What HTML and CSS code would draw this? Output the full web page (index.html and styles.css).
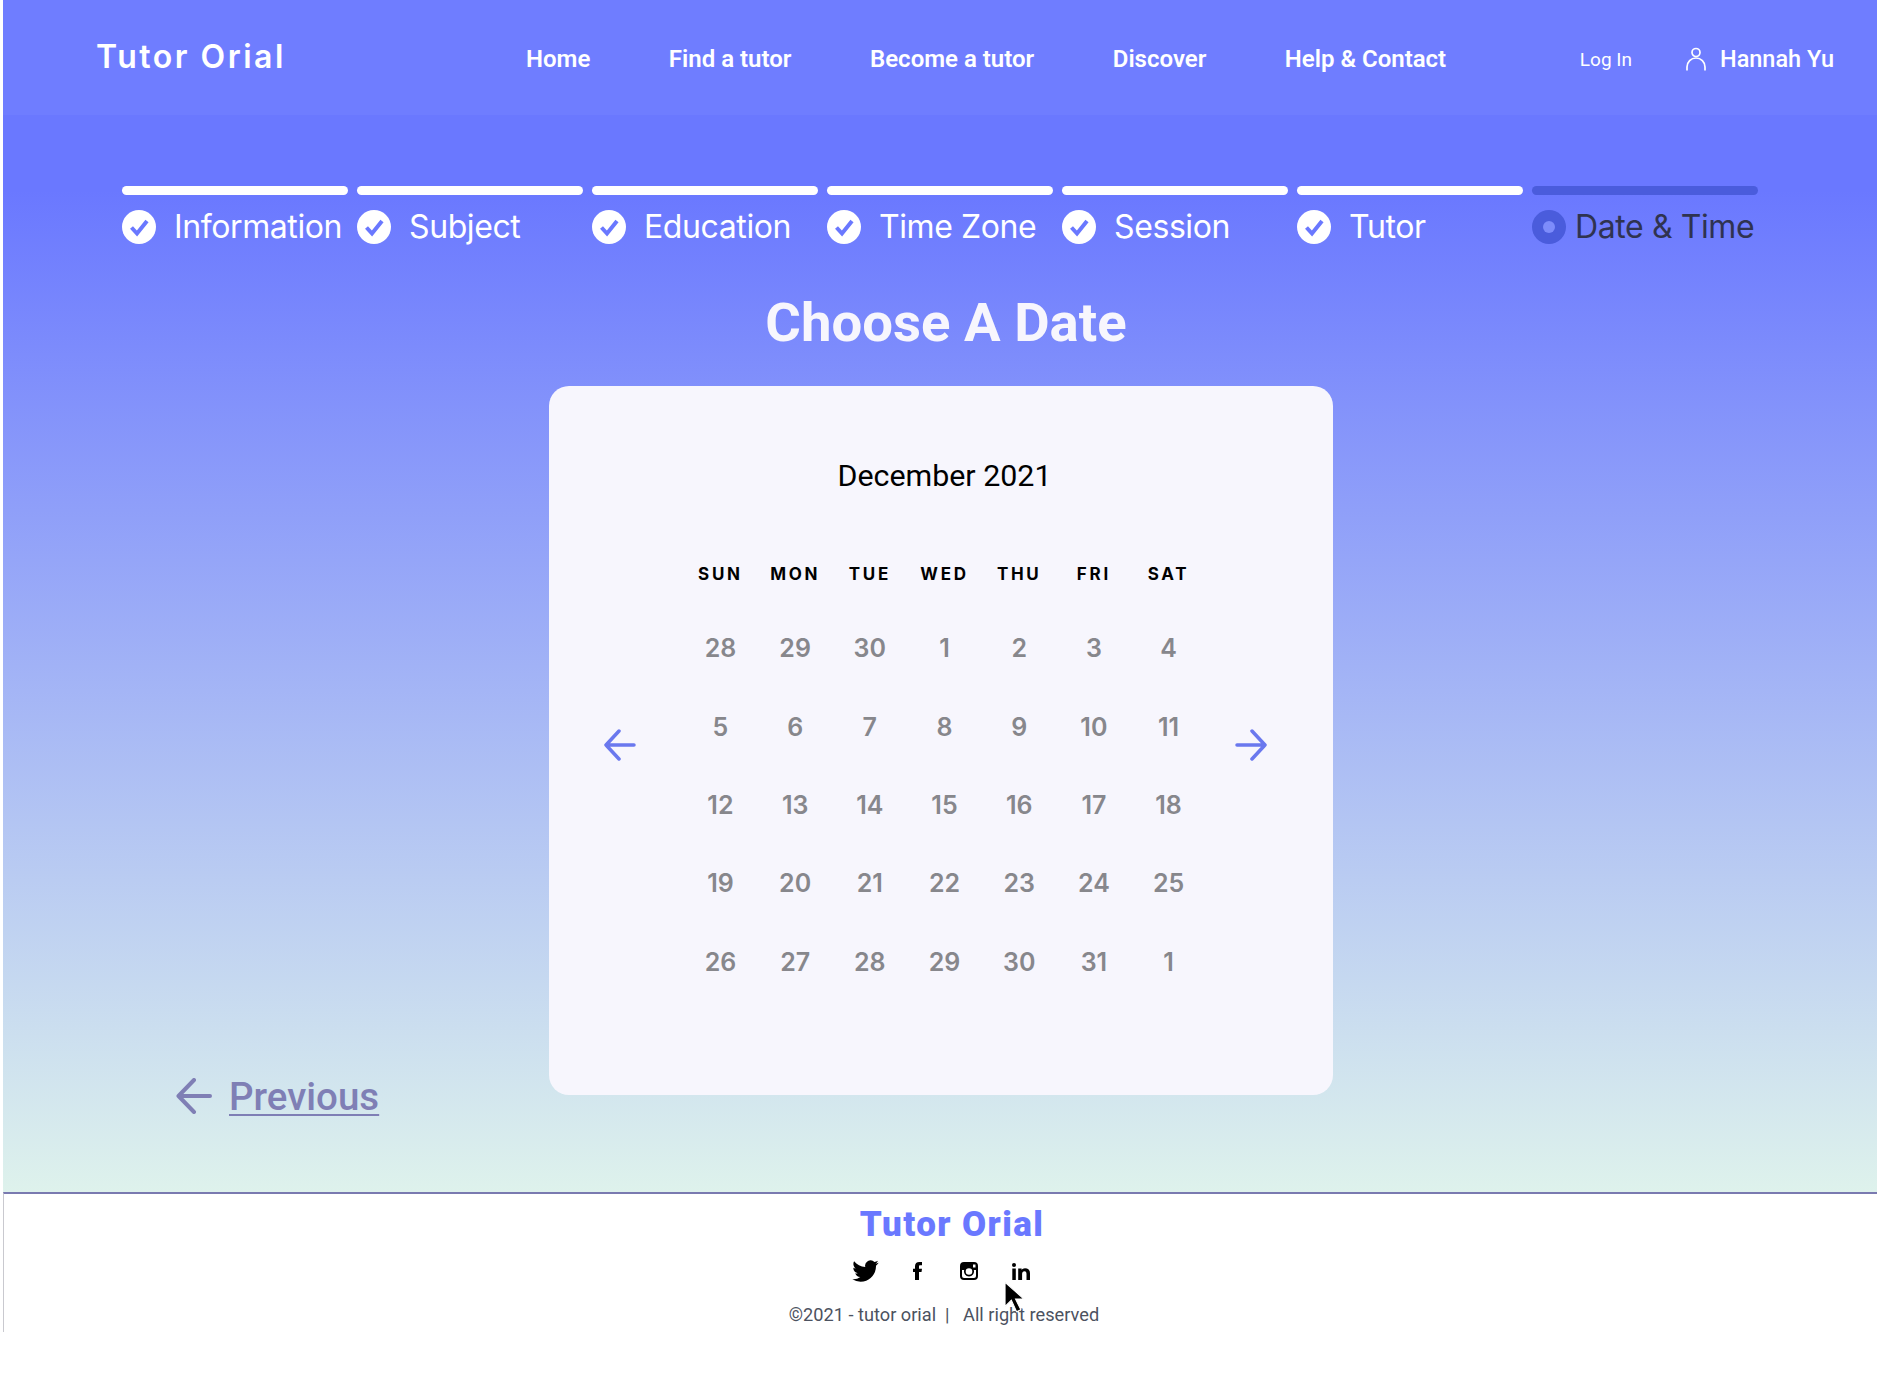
FILE: index.html
```html
<!DOCTYPE html>
<html lang="en">
<head>
    <meta charset="UTF-8">
    <meta name="viewport" content="width=device-width, initial-scale=1.0">
    <title>Tutor Orial - Choose A Date</title>
    <link rel="stylesheet" href="styles.css">
</head>
<body>
    <svg class="sprites" width="0" height="0">
        <symbol id="done" viewBox="0 0 34 34">
            <circle cx="17" cy="17" r="17" fill="#fff"/>
            <path d="M9.5 17.5l5.5 6L25 11" fill="none" stroke="#6a78ff" stroke-width="4"/>
        </symbol>
    </svg>
    <div class="page">
        <header class="topbar">
            <a class="logo">Tutor Orial</a>
            <nav class="nav">
                <a>Home</a>
                <a>Find a tutor</a>
                <a>Become a tutor</a>
                <a>Discover</a>
                <a>Help &amp; Contact</a>
            </nav>
            <div class="account">
                <a class="login">Log In</a>
                <a class="user">
                    <svg class="user-icon" viewBox="0 0 20 24" fill="none" stroke="#fff" stroke-width="1.7">
                        <circle cx="10" cy="5.5" r="4"/>
                        <path d="M1 23.5v-3.5c0-5 4-9 9-9s9 4 9 9v3.5"/>
                    </svg>
                    Hannah Yu
                </a>
            </div>
        </header>

        <main class="hero">
            <ol class="steps">
                <li class="step"><svg class="step-icon"><use href="#done"/></svg><span>Information</span></li>
                <li class="step"><svg class="step-icon"><use href="#done"/></svg><span>Subject</span></li>
                <li class="step"><svg class="step-icon"><use href="#done"/></svg><span>Education</span></li>
                <li class="step"><svg class="step-icon"><use href="#done"/></svg><span>Time Zone</span></li>
                <li class="step"><svg class="step-icon"><use href="#done"/></svg><span>Session</span></li>
                <li class="step"><svg class="step-icon"><use href="#done"/></svg><span>Tutor</span></li>
                <li class="step current">
                    <svg class="step-icon" viewBox="0 0 34 34">
                        <circle cx="17" cy="17" r="17" fill="#4a5cdc"/>
                        <circle cx="17" cy="17" r="6" fill="#7d8cfb"/>
                    </svg>
                    <span>Date &amp; Time</span>
                </li>
            </ol>

            <h1 class="title">Choose A Date</h1>

            <div class="booking">
                <a class="previous">
                    <svg class="previous-icon" viewBox="0 0 36 36" fill="none" stroke="#7f7fb5" stroke-width="4" stroke-linecap="round" stroke-linejoin="round">
                        <path d="M34 18H3M18 2L2.5 18 18 34"/>
                    </svg>
                    <span>Previous</span>
                </a>

                <section class="calendar">
                    <h2 class="month">December 2021</h2>
                    <div class="calendar-body">
                        <svg class="arrow" viewBox="0 0 32 32" fill="none" stroke="#6a78ee" stroke-width="3.5" stroke-linecap="round" stroke-linejoin="round">
                            <path d="M30 16H2M15 2L2 16l13 14"/>
                        </svg>
                        <div class="days">
                            <b>SUN</b><b>MON</b><b>TUE</b><b>WED</b><b>THU</b><b>FRI</b><b>SAT</b>
                            <span>28</span><span>29</span><span>30</span><span>1</span><span>2</span><span>3</span><span>4</span>
                            <span>5</span><span>6</span><span>7</span><span>8</span><span>9</span><span>10</span><span>11</span>
                            <span>12</span><span>13</span><span>14</span><span>15</span><span>16</span><span>17</span><span>18</span>
                            <span>19</span><span>20</span><span>21</span><span>22</span><span>23</span><span>24</span><span>25</span>
                            <span>26</span><span>27</span><span>28</span><span>29</span><span>30</span><span>31</span><span>1</span>
                        </div>
                        <svg class="arrow" viewBox="0 0 32 32" fill="none" stroke="#6a78ee" stroke-width="3.5" stroke-linecap="round" stroke-linejoin="round">
                            <path d="M2 16h28M17 2l13 14-13 14"/>
                        </svg>
                    </div>
                </section>
            </div>
        </main>

        <footer class="footer">
            <div class="footer-logo">Tutor Orial</div>
            <div class="social">
                <svg class="icon-twitter" viewBox="0 0 24 20"><path d="M23.953 2.57a10 10 0 01-2.825.775 4.958 4.958 0 002.163-2.723c-.951.555-2.005.959-3.127 1.184a4.92 4.92 0 00-8.384 4.482C7.69 6.095 4.067 4.13 1.64 1.162a4.822 4.822 0 00-.666 2.475c0 1.71.87 3.213 2.188 4.096a4.904 4.904 0 01-2.228-.616v.06a4.923 4.923 0 003.946 4.827 4.996 4.996 0 01-2.212.085 4.936 4.936 0 004.604 3.417 9.867 9.867 0 01-6.102 2.105c-.39 0-.779-.023-1.17-.067a13.995 13.995 0 007.557 2.209c9.053 0 13.998-7.496 13.998-13.985 0-.21 0-.42-.015-.63A9.935 9.935 0 0024 2.59z"/></svg>
                <svg class="icon-facebook" viewBox="0 0 9 18"><path d="M2 18V10H0V6.800h2V4.300C2 1.500 3.600 0 6.300 0H9v3.200H7.300C6.300 3.200 6 3.700 6 4.500v2.300h3L8.500 10H6v8z"/></svg>
                <svg class="icon-instagram" viewBox="0 0 18 18"><path fill-rule="evenodd" d="M4 0h10a4 4 0 014 4v10a4 4 0 01-4 4H4a4 4 0 01-4-4V4a4 4 0 014-4zM2 8v6a2 2 0 002 2h10a2 2 0 002-2V8h-2.200a5 5 0 11-9.600 0zM13 2.500V5.500h2.500V2.500zM9 6.200a3.300 3.300 0 100 6.600 3.300 3.300 0 000-6.600z"/></svg>
                <svg class="icon-linkedin" viewBox="0 0 18 17"><circle cx="2" cy="2" r="2"/><rect x="0.3" y="5.5" width="3.5" height="11.5"/><path d="M6.200 5.500h3.400V7c.7-1.100 1.900-1.800 3.400-1.800 3.500 0 5 2 5 5.300V17h-3.500v-5.900c0-1.600-.5-2.800-2-2.800-1.600 0-2.400 1.200-2.400 2.800V17H6.200z"/></svg>
            </div>
            <p class="copyright">©2021 - tutor orial &nbsp;|&nbsp;&nbsp; All right reserved</p>
            <svg class="cursor" viewBox="0 0 20 30">
                <path d="M1 1v23l6-6 5 11 4-2-5-10h8z" fill="#000" stroke="#fff" stroke-width="1"/>
            </svg>
        </footer>
    </div>
</body>
</html>
```

FILE: styles.css
```css
* {
    box-sizing: border-box;
}
html, body {
    height: 100%;
}
body {
    margin: 0;
    background-color: #fff;
    font-family: Inter, "Liberation Sans", sans-serif;
}
.sprites {
    position: absolute;
}
.page {
    margin: 0 3px;
}

/* top bar */
.topbar {
    display: flex;
    align-items: center;
    height: 115px;
    padding: 0 43px 0 93px;
    background-color: #6f7dff;
    color: #fff;
}
.logo {
    width: 430px;
    margin-top: -3px;
    font-size: 32px;
    font-weight: 600;
    letter-spacing: 2.5px;
}
.nav {
    display: flex;
    gap: 78.5px;
    margin-top: 3px;
    font-family: Roboto, sans-serif;
    font-size: 24px;
    font-weight: 600;
}
.account {
    display: flex;
    align-items: center;
    margin-top: 3px;
    margin-left: auto;
    gap: 54px;
}
.login {
    font-family: Roboto, sans-serif;
    font-size: 19px;
}
.user {
    display: flex;
    align-items: center;
    gap: 14px;
    font-family: Roboto, sans-serif;
    font-size: 23.5px;
    font-weight: 500;
}
.user-icon {
    width: 20px;
    height: 24px;
}

/* main area */
.hero {
    height: 1077px;
    padding: 71px 0 0 119px;
    background: linear-gradient(#6a78ff 7%, #def2ec 100%);
}
.steps {
    display: grid;
    grid-template-columns: repeat(7, 226px);
    gap: 9px;
    margin: 0;
    padding: 0;
    list-style: none;
}
.step {
    display: flex;
    flex-wrap: wrap;
    align-items: center;
    gap: 12px 18px;
    color: #fff;
    font-size: 32px;
    white-space: nowrap;
}
.step::before {
    content: "";
    flex: 0 0 100%;
    height: 9px;
    border-radius: 5px;
    background-color: #fff;
}
.step span {
    letter-spacing: -0.4px;
}
.step-icon {
    flex: none;
    width: 34px;
    height: 34px;
}
.current {
    column-gap: 9px;
    color: #2f3350;
}
.current::before {
    background-color: #4a5cdc;
}
.title {
    margin: 43px 0 0 0;
    padding-right: 107px;
    color: #f7f6fd;
    font-family: Roboto, sans-serif;
    font-size: 54.5px;
    font-weight: 700;
    line-height: 66px;
    text-align: center;
}

.booking {
    display: flex;
    align-items: flex-end;
    margin-top: 31px;
}
.previous {
    display: flex;
    align-items: center;
    gap: 17px;
    width: 427px;
    margin-bottom: -23.5px;
    padding-left: 54px;
    color: #7f7fb5;
    font-family: Roboto, sans-serif;
    font-size: 38.5px;
    font-weight: 500;
}
.previous span {
    text-decoration: underline;
    text-decoration-thickness: 2px;
    text-underline-offset: 4px;
}
.previous-icon {
    width: 36px;
    height: 36px;
}

/* calendar card */
.calendar {
    width: 784px;
    height: 709px;
    padding-top: 70px;
    border-radius: 20px;
    background-color: #f7f6fd;
}
.month {
    margin: 0 0 0 7px;
    color: #000;
    font-family: Roboto, sans-serif;
    font-size: 30.4px;
    font-weight: 400;
    line-height: 40px;
    text-align: center;
}
.calendar-body {
    display: flex;
    align-items: center;
    justify-content: space-between;
    margin-top: 43px;
    padding: 0 66px 0 55px;
}
.arrow {
    width: 32px;
    height: 32px;
    margin-bottom: 50px;
}
.days {
    display: grid;
    grid-template-columns: repeat(7, 74.7px);
    grid-template-rows: 70.3px;
    grid-auto-rows: 78.3px;
    align-items: center;
    justify-items: center;
    margin-left: 18px;
}
.days b {
    color: #000;
    font-size: 17px;
    font-weight: 700;
    letter-spacing: 2.7px;
}
.days span {
    color: #87878c;
    font-size: 25px;
    font-weight: 600;
}

/* footer */
.footer {
    position: relative;
    display: flex;
    flex-direction: column;
    align-items: center;
    height: 140px;
    padding-top: 10px;
    padding-right: 5px;
    border-top: 2px solid #7a7ab0;
    border-left: 1px solid #c9c9cf;
}
.footer-logo {
    margin-left: 28px;
    color: #6a78ff;
    font-family: Roboto, sans-serif;
    font-size: 35px;
    font-weight: 900;
    letter-spacing: 1.4px;
    line-height: 42px;
}
.social {
    display: grid;
    grid-template-columns: repeat(4, 52px);
    align-items: center;
    justify-items: center;
    margin-top: 14px;
    margin-left: 10px;
}
.icon-twitter {
    width: 27px;
    height: 22px;
}
.icon-facebook {
    width: 9px;
    height: 18px;
}
.icon-instagram {
    width: 18px;
    height: 18px;
}
.icon-linkedin {
    width: 18px;
    height: 17px;
}
.copyright {
    margin: 22px 0 0 12px;
    color: #4c5260;
    font-family: Roboto, sans-serif;
    font-size: 18.2px;
}
.cursor {
    position: absolute;
    top: 87px;
    left: 1000px;
    width: 21px;
    height: 32px;
}
```
